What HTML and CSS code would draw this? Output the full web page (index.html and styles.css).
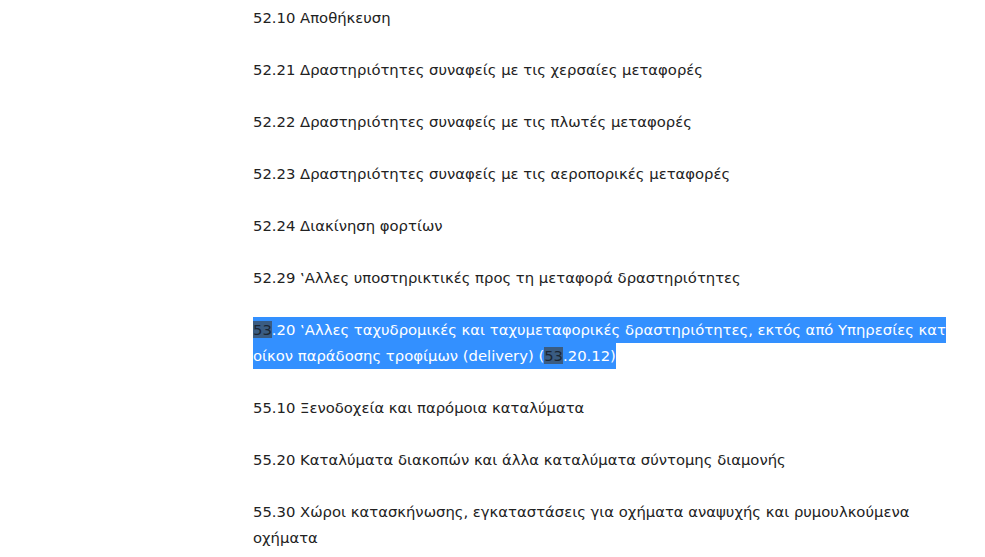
FILE: index.html
```html
<!DOCTYPE html>
<html lang="el">
<head>
    <meta charset="UTF-8">
    <title>Κωδικοί Δραστηριότητας</title>
    <link rel="stylesheet" href="styles.css">
</head>
<body>
    <main class="content">
        <p>52.10 Αποθήκευση</p>
        <p>52.21 Δραστηριότητες συναφείς με τις χερσαίες μεταφορές</p>
        <p>52.22 Δραστηριότητες συναφείς με τις πλωτές μεταφορές</p>
        <p>52.23 Δραστηριότητες συναφείς με τις αεροπορικές μεταφορές</p>
        <p>52.24 Διακίνηση φορτίων</p>
        <p>52.29 ‛Αλλες υποστηρικτικές προς τη μεταφορά δραστηριότητες</p>
        <p><span class="sel"><span class="found">53</span>.20 ‛Αλλες ταχυδρομικές και ταχυμεταφορικές δραστηριότητες, εκτός από Υπηρεσίες κατ οίκον παράδοσης τροφίμων (delivery) (<span class="found">53</span>.20.12)</span></p>
        <p>55.10 Ξενοδοχεία και παρόμοια καταλύματα</p>
        <p>55.20 Καταλύματα διακοπών και άλλα καταλύματα σύντομης διαμονής</p>
        <p>55.30 Χώροι κατασκήνωσης, εγκαταστάσεις για οχήματα αναψυχής και ρυμουλκούμενα οχήματα</p>
    </main>
</body>
</html>
```

FILE: styles.css
```css
body, p {
    margin: 0;
    padding: 0;
}

body {
    background-color: #fff;
    font-family: "DejaVu Sans", Verdana, sans-serif;
    font-size: 14.8px;
    color: #222;
}

.content {
    width: 708px;
    margin-left: 253px;
    padding-top: 5px;
}

.content p {
    line-height: 26px;
    margin-bottom: 26px;
}

.sel {
    background-color: #3390ff;
    color: #fff;
    padding: 4px 0 5px;
}

.found {
    background-color: #3a5c82;
    color: #1b2633;
}
```
